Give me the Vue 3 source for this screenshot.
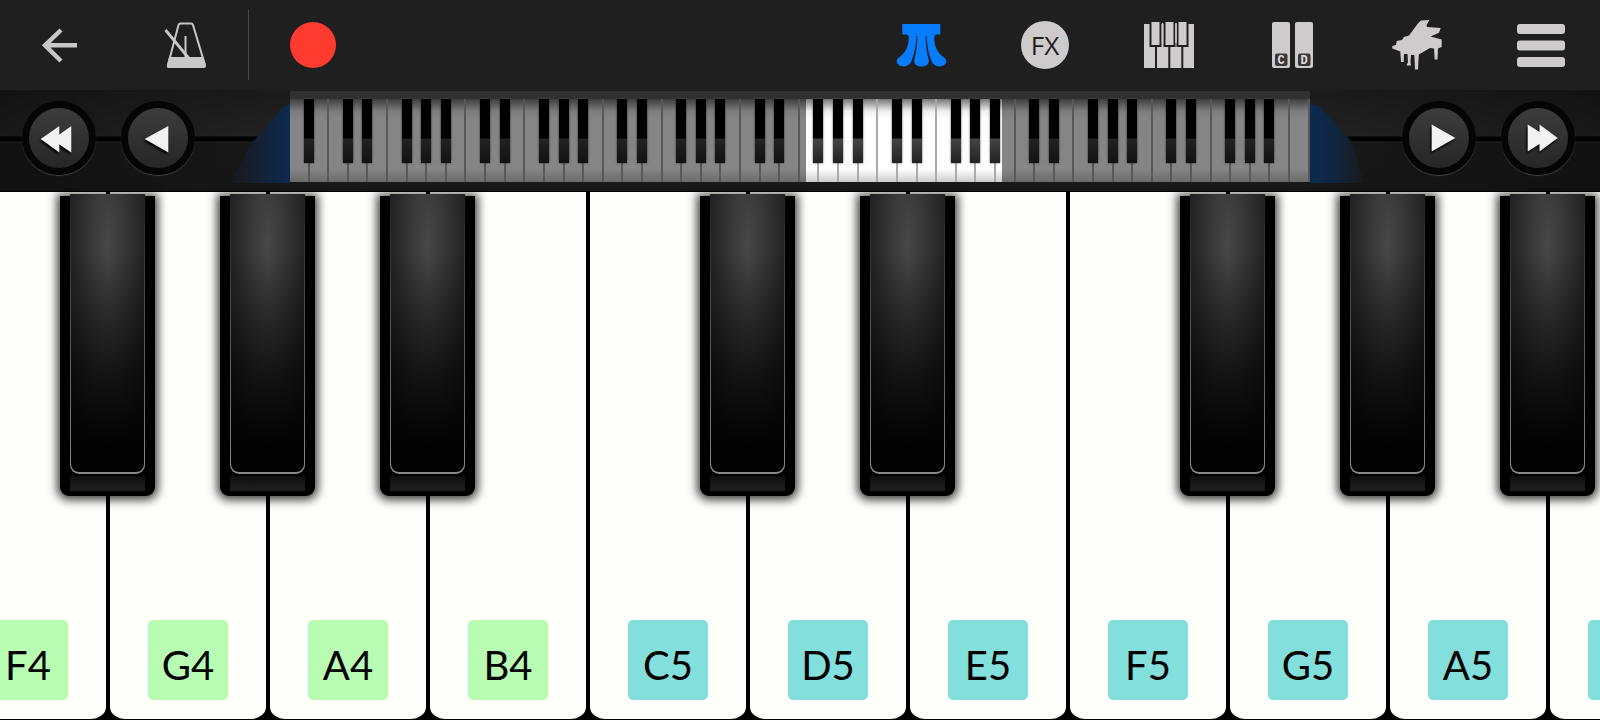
<script setup>
import {ref} from "vue";

const recording = ref(false)
const pressed = ref(-1)

// the last key only shows its left edge, so it carries no name
const keys = [
  {id: 0, name: 'F4', octave: 4, sharp: true},
  {id: 1, name: 'G4', octave: 4, sharp: true},
  {id: 2, name: 'A4', octave: 4, sharp: true},
  {id: 3, name: 'B4', octave: 4, sharp: false},
  {id: 4, name: 'C5', octave: 5, sharp: true},
  {id: 5, name: 'D5', octave: 5, sharp: true},
  {id: 6, name: 'E5', octave: 5, sharp: false},
  {id: 7, name: 'F5', octave: 5, sharp: true},
  {id: 8, name: 'G5', octave: 5, sharp: true},
  {id: 9, name: 'A5', octave: 5, sharp: true},
  {id: 10, name: '', octave: 5, sharp: false},
]

// 52 white keys from A0 to C8
const miniKeys = Array.from({length: 52}, (_, i) => ({
  id: i,
  sharp: i < 51 && ![1, 4].includes(i % 7),
}))
</script>

<template>
  <div class="piano">
    <header class="toolbar">
      <div class="tools-left">
        <button class="tool" aria-label="Back">
          <svg class="icon" viewBox="0 0 52 52">
            <path d="M25 11 9 26.3 25 42M8 26.3H41" fill="none" stroke="#c8c8c8" stroke-width="4.4"/>
          </svg>
        </button>
        <button class="tool" aria-label="Metronome">
          <svg class="icon" viewBox="0 0 52 52">
            <path d="M8 46 18.5 6Q19 4.500 20.500 4.500H31Q32.500 4.500 33 6L45 46" fill="none" stroke="#c8c8c8" stroke-width="2"/>
            <path d="M9 38H43.500L46 47Q46 49 44 49H8.500Q6.500 49 6.800 47Z" fill="#c8c8c8"/>
            <path d="M25.500 17V38" stroke="#c8c8c8" stroke-width="2"/>
            <path d="M5.500 11 29 39.500" stroke="#c8c8c8" stroke-width="2.800"/>
          </svg>
        </button>
      </div>
      <button class="tool record" aria-label="Record" @click="recording = !recording">
        <span class="record-dot"></span>
      </button>
      <div class="tools-right">
        <button class="tool" aria-label="Pedal">
          <svg class="icon" viewBox="-1 0 52 52" fill="#087dfb">
            <path d="M6.300 5H44.300V15.500H40L37.500 17H13L10.500 15.500H6.300Z"/>
            <path d="M12.500 15H20.500C20 25 19 34 15 43C12 48 6 48.500 3 46C0 44 0 40.500 3 38.500C11 33 13.500 25 12.500 15Z"/>
            <path d="M21.300 15H29.700C29.700 25 30.500 32 32.500 40C34 45 30 47.500 25.500 47.500C21 47.500 17 45 18.500 40C20.500 32 21.300 25 21.300 15Z"/>
            <path d="M38.500 15H30.500C31 25 32 34 36 43C39 48 45 48.500 48 46C51 44 51 40.500 48 38.500C40 33 37.500 25 38.500 15Z"/>
          </svg>
        </button>
        <button class="tool" aria-label="Effects"><span class="fx">FX</span></button>
        <button class="tool" aria-label="Keyboard layout">
          <svg class="icon" viewBox="0 0 52 52">
            <path d="M1 5H51V49H1Z" fill="#cecbcc"/>
            <path d="M13 26V49M26.300 26V49M39.300 26V49" stroke="#201f20" stroke-width="2"/>
            <g fill="#cecbcc" stroke="#201f20" stroke-width="2">
              <path d="M7.500 2H17.500V27H7.500ZM21.500 2H31.500V27H21.500ZM34.500 2H44.500V27H34.500Z"/>
            </g>
            <path d="M19.500 4V24M33 4V24" stroke="#cecbcc" stroke-width="1.500"/>
          </svg>
        </button>
        <button class="tool" aria-label="Note labels">
          <svg class="icon labels" viewBox="0 0 52 52">
            <rect x="5" y="3" width="18" height="46" rx="2" fill="#cecbcc"/>
            <rect x="28" y="3" width="18" height="46" rx="2" fill="#cecbcc"/>
            <rect x="8" y="34.500" width="12.500" height="12.500" rx="2" fill="#3a393a"/>
            <rect x="31" y="34.500" width="12.500" height="12.500" rx="2" fill="#3a393a"/>
            <text x="14.200" y="45">C</text>
            <text x="37.200" y="45">D</text>
          </svg>
        </button>
        <button class="tool" aria-label="Instrument">
          <svg class="icon" viewBox="0 0 52 52" fill="#cecbcc">
            <path d="M1.300 27 5 26 5.700 22 11 21 13 18 18 16.500 27.300 4 30 1.500 38.500 1 35.500 6 36 8 49.700 9 48 13.700 39.500 17.500 50.700 20.500V28L47 29.500 46.500 40.500H43.700L43 29.500 39 29 27.800 35.500 27 50.500H24L23.300 36H20L19.500 43 20 46.500H15.500L17 43 16.500 35H13L12.700 43H10L9.300 32.500 1.300 29.500Z"/>
          </svg>
        </button>
        <button class="tool" aria-label="Menu">
          <svg class="icon" viewBox="0 0 52 52" fill="#cecbcc">
            <rect x="2" y="5" width="48" height="10" rx="3"/>
            <rect x="2" y="21.500" width="48" height="10" rx="3"/>
            <rect x="2" y="38" width="48" height="10" rx="3"/>
          </svg>
        </button>
      </div>
    </header>

    <nav class="strip">
      <button class="round" aria-label="Previous octave">
        <svg class="arrow" viewBox="0 0 40 40"><path d="M1.700 21 20.300 8V16.500L32.300 8V34.500L20.300 26.500V34.500Z"/></svg>
      </button>
      <button class="round" aria-label="Previous key">
        <svg class="arrow" viewBox="0 0 40 40"><path d="M6.700 21 30.300 8V34.500Z"/></svg>
      </button>
      <div class="wing wing-left"></div>
      <div class="mini">
        <span v-for="key in miniKeys" :key="key.id" class="mini-key" :class="{'mini-sharp': key.sharp}"></span>
        <div class="range">
          <span class="range-before"></span>
          <span class="range-view"></span>
          <span class="range-after"></span>
        </div>
      </div>
      <div class="wing wing-right"></div>
      <button class="round" aria-label="Next key">
        <svg class="arrow" viewBox="0 0 40 40"><path d="M12.700 6.500 36.300 20 12.700 33.500Z"/></svg>
      </button>
      <button class="round" aria-label="Next octave">
        <svg class="arrow" viewBox="0 0 40 40"><path d="M9.700 6.500 21.500 14V6.500L39.700 20 21.500 33.500V26L9.700 33.500Z"/></svg>
      </button>
    </nav>

    <main class="keyboard">
      <div v-for="key in keys" :key="key.id" class="key">
        <button class="white" :class="{pressed: pressed === key.id}" :aria-label="key.name || 'Next key'" @click="pressed = key.id">
          <span class="note" :class="{high: key.octave === 5}">{{ key.name }}</span>
        </button>
        <button v-if="key.sharp" class="black" :aria-label="key.name + ' sharp'">
          <span class="black-edge"><span class="black-face"></span></span>
          <span class="black-lip"></span>
        </button>
      </div>
    </main>
  </div>
</template>

<style>
body {
  margin: 0;
  background: #000;
}
</style>

<style scoped>
.piano {
  display: flex;
  flex-direction: column;
  min-height: 100vh;
  overflow: hidden;
  background: #000;
  font-family: Lato, "Liberation Sans", sans-serif;
}

button {
  padding: 0;
  border: 0;
  background: none;
  font-family: inherit;
  cursor: pointer;
}

/* toolbar */
.toolbar {
  display: flex;
  align-items: center;
  height: 90px;
  background: #201f20;
}

.tools-left {
  display: flex;
  align-items: center;
  height: 70px;
  border-right: 1px solid #4a4a4a;
}

.tools-right {
  display: flex;
  gap: 8px;
  margin-left: auto;
  padding-right: 1px;
}

.tool {
  display: flex;
  align-items: center;
  justify-content: center;
  width: 124px;
  height: 70px;
}

.tools-right .tool {
  width: 116px;
}

.tool.record {
  width: 128px;
}

.icon {
  width: 52px;
  height: 52px;
}

.record-dot {
  width: 46px;
  height: 46px;
  border-radius: 50%;
  background: #ff3b30;
}

.fx {
  width: 48px;
  border-radius: 50%;
  background: #cecbcc;
  color: #201f20;
  font: 400 26px/48px "Open Sans", sans-serif;
}

.labels text {
  fill: #e0dedf;
  font: bold 12px "Liberation Mono", monospace;
  text-anchor: middle;
}

/* navigation strip */
.strip {
  display: flex;
  align-items: flex-start;
  box-sizing: border-box;
  height: 102px;
  padding: 11px 25px 0 22px;
  border-bottom: 1px solid #000;
  background:
    linear-gradient(transparent 46px, #000 47px, #000 51px, #222 52px, transparent 53px),
    linear-gradient(90deg, rgba(0, 0, 0, .3), transparent 20%, transparent 80%, rgba(0, 0, 0, .3)),
    linear-gradient(#1b1b1b, #232323 46px, #191919 52px, #181818);
}

.round {
  display: flex;
  align-items: center;
  justify-content: center;
  flex: none;
  box-sizing: border-box;
  width: 74px;
  height: 74px;
  border: 7px solid #050505;
  border-radius: 50%;
  background: linear-gradient(#3c3c3c, #262626);
  box-shadow: 0 1px 1px #484848;
}

.round + .round {
  margin-left: 25px;
}

.arrow {
  flex: none;
  width: 40px;
  height: 40px;
  fill: #f2f2f2;
  filter: drop-shadow(-1px 2px 1px #000);
}

.wing {
  flex: none;
  width: 60px;
  height: 82px;
}

.wing-left {
  margin-left: 35px;
  background: linear-gradient(90deg, #18191a, #14223a 60%, #0c2a50);
  clip-path: polygon(100% 3%, 88% 8%, 38% 50%, 0 100%, 100% 100%);
}

.wing-right {
  margin-right: 32px;
  background: linear-gradient(90deg, #0c2b52, #12243a 50%, #18191a 90%);
  clip-path: polygon(0 3%, 18% 8%, 70% 50%, 90% 100%, 0 100%);
}

.mini {
  display: flex;
  flex: 1;
  position: relative;
  height: 83px;
  margin-top: -2px;
  background: linear-gradient(#777, #eee 12px, #fff 20px, #fff 70px, #ccc);
  box-shadow: 0 -8px 0 #303030;
}

.mini-key {
  flex: 1;
  position: relative;
  box-sizing: border-box;
  border-right: 2px solid #aaa;
}

.mini-sharp::after {
  content: "";
  position: absolute;
  z-index: 1;
  top: 0;
  right: -6px;
  width: 10px;
  height: 64px;
  background: linear-gradient(#000 39px, #444 40px, #222);
  box-shadow: 0 0 2px #555;
}

.range {
  display: flex;
  position: absolute;
  z-index: 2;
  inset: 0;
}

.range-before,
.range-after {
  background: rgba(0, 0, 0, .48);
}

.range-before {
  width: 50.6%;
}

.range-view {
  width: 19.2%;
}

.range-after {
  flex: 1;
}

/* keyboard */
.keyboard {
  display: flex;
  flex: 1;
  min-height: 400px;
  margin-left: -3.25%;
  margin-right: -6.75%;
  padding-bottom: 1px;
}

.key {
  display: flex;
  flex: 1;
  position: relative;
  padding: 0 2px;
}

.white {
  display: flex;
  flex: 1;
  align-items: flex-end;
  justify-content: center;
  padding-bottom: 19px;
  border-radius: 0 0 16px 16px / 0 0 12px 12px;
  background: #fefffa;
}

.white.pressed {
  background: #e8e8e2;
}

.note {
  box-sizing: border-box;
  width: 80px;
  height: 80px;
  padding-top: 7px;
  border-radius: 5px;
  background: #b8fbb2;
  color: #000;
  font-size: 40px;
  line-height: 76px;
}

.note.high {
  background: #82dfdb;
}

.black {
  display: flex;
  flex-direction: column;
  position: absolute;
  z-index: 1;
  top: 4px;
  left: 70%;
  box-sizing: border-box;
  width: 59.5%;
  height: 57%;
  padding: 0 10px 5px;
  border-radius: 0 0 9px 9px;
  background: #000;
  box-shadow: 0 1px 10px 3px rgba(0, 0, 0, .75);
}

.black-edge {
  display: flex;
  flex: 1;
  margin-top: -2px;
  padding: 0 1px 2px;
  border-radius: 0 0 9px 9px;
  background: linear-gradient(#222, #555 50%, #888);
}

.black-face {
  flex: 1;
  border-radius: 0 0 8px 8px;
  background:
    linear-gradient(transparent 20%, rgba(0, 0, 0, .9) 90%),
    radial-gradient(ellipse 60% 80% at 50% 20%, #484848, #1c1c1c);
}

.black-lip {
  height: 15px;
  margin-top: 2px;
  background: linear-gradient(#101010, #1e1e1e);
}
</style>
